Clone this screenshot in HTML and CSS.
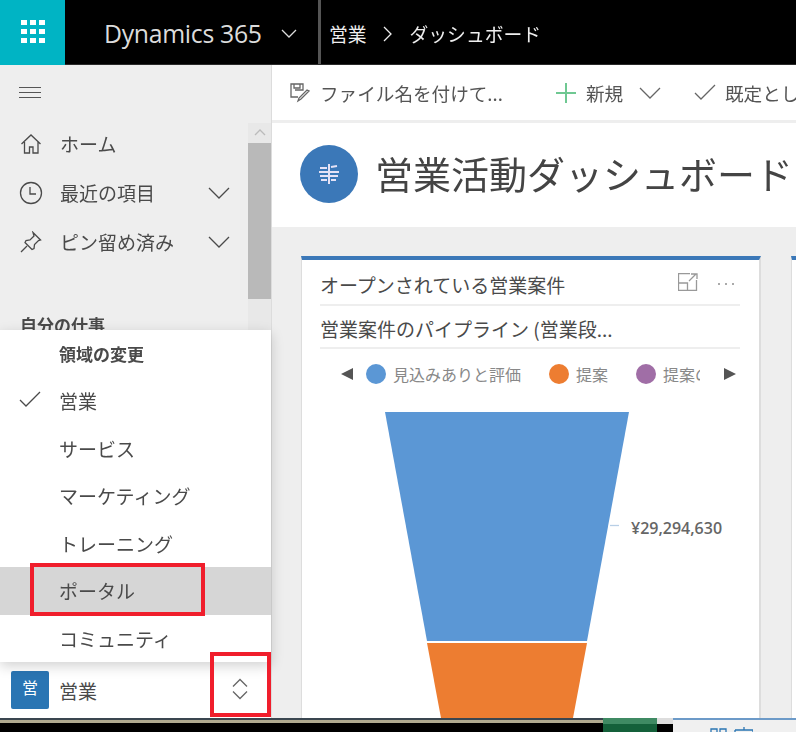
FILE: index.html
```html
<!DOCTYPE html>
<html lang="ja">
    <head>
        <meta charset="UTF-8" />
        <meta name="viewport" content="width=device-width, initial-scale=1.0" />
        <title>営業活動ダッシュボード</title>
        <link rel="stylesheet" href="styles.css">
    </head>
    <body>
        <div class="topbar">
            <div class="app-launcher">
                <svg width="24" height="24" viewBox="0 0 24 24" fill="#fff">
                    <rect x="0" y="0" width="6" height="5" /><rect x="9" y="0" width="6" height="5" /><rect x="18" y="0" width="6" height="5" />
                    <rect x="0" y="9" width="6" height="5" /><rect x="9" y="9" width="6" height="5" /><rect x="18" y="9" width="6" height="5" />
                    <rect x="0" y="18" width="6" height="5" /><rect x="9" y="18" width="6" height="5" /><rect x="18" y="18" width="6" height="5" />
                </svg>
            </div>
            <div class="brand">
                <span class="brand-name">Dynamics 365</span>
                <svg class="brand-chevron" width="16" height="9" viewBox="0 0 16 9"><path d="M1 1l7 7 7-7" /></svg>
            </div>
            <div class="breadcrumb">
                <span>営業</span>
                <svg width="10" height="16" viewBox="0 0 10 16"><path d="M1 1l7 7-7 7" /></svg>
                <span>ダッシュボード</span>
            </div>
        </div>

        <div class="main">
            <aside class="sidebar">
                <div class="hamburger"><span></span><span></span><span></span></div>
                <div class="side-scroll">
                    <div class="scroll-up">
                        <svg width="12" height="7" viewBox="0 0 12 7"><path d="M1 6l5-5 5 5" /></svg>
                    </div>
                    <div class="scroll-thumb"></div>
                </div>
                <div class="nav-item nav-home">
                    <svg class="nav-icon" width="22" height="22" viewBox="0 0 22 22"><path d="M1.500 11L11 2l9.500 9M4.500 9v11h5v-6h3.500v6h5V9" /></svg>
                    <span>ホーム</span>
                </div>
                <div class="nav-item">
                    <svg class="nav-icon" width="24" height="24" viewBox="0 0 24 24"><path d="M12 1.500a10.500 10.500 0 1 0 0 21a10.500 10.500 0 1 0 0-21zM11 6v7h6" /></svg>
                    <span>最近の項目</span>
                    <svg class="nav-chevron" width="22" height="12" viewBox="0 0 22 12"><path d="M1 1l10 10L21 1" /></svg>
                </div>
                <div class="nav-item">
                    <svg class="nav-icon" width="22" height="22" viewBox="0 0 22 22"><path d="M13 1.500l7.500 7.500-2 .5-4 4-.5 4-2 1-7-7 1-2 4-.5 4-4zM7 15l-6 6" /></svg>
                    <span>ピン留め済み</span>
                    <svg class="nav-chevron" width="22" height="12" viewBox="0 0 22 12"><path d="M1 1l10 10L21 1" /></svg>
                </div>
                <div class="nav-heading">自分の仕事</div>

                <div class="flyout">
                    <div class="flyout-title">領域の変更</div>
                    <div class="flyout-item">
                        <svg class="flyout-check" width="22" height="17" viewBox="0 0 22 17"><path d="M1 9l6 6L21 1" /></svg>
                        <span>営業</span>
                    </div>
                    <div class="flyout-item"><span>サービス</span></div>
                    <div class="flyout-item"><span>マーケティング</span></div>
                    <div class="flyout-item"><span>トレーニング</span></div>
                    <div class="flyout-item selected"><span>ポータル</span><div class="red-box portal-box"></div></div>
                    <div class="flyout-item"><span>コミュニティ</span></div>
                </div>

                <div class="area-switch">
                    <div class="area-tile">営</div>
                    <span class="area-name">営業</span>
                    <svg class="area-arrows" width="16" height="22" viewBox="0 0 16 22"><path d="M1 8.500L8 1.500l7 7M1 13.500L8 20.500l7-7" /></svg>
                    <div class="red-box arrows-box"></div>
                </div>
            </aside>

            <div class="content">
                <div class="commandbar">
                    <div class="cmd cmd-save">
                        <svg class="cmd-icon" width="22" height="21" viewBox="0 0 22 21"><path d="M9 15H2V2h12v6H6M5 2v4h6V2M20 9l-8 8-3 2 1-3 8-8z" /></svg>
                        <span>ファイル名を付けて...</span>
                    </div>
                    <div class="cmd cmd-new">
                        <svg width="22" height="22" viewBox="0 0 22 22"><path class="plus" d="M11 1v20M1 11h20" /></svg>
                        <span>新規</span>
                        <svg class="cmd-icon" width="22" height="12" viewBox="0 0 22 12"><path d="M1 1l10 10L21 1" /></svg>
                    </div>
                    <div class="cmd cmd-default">
                        <svg class="cmd-icon" width="22" height="17" viewBox="0 0 22 17"><path d="M1 9l6 6L21 1" /></svg>
                        <span>既定として設定</span>
                    </div>
                </div>

                <div class="titlebar">
                    <div class="title-badge">
                        <svg width="22" height="20" viewBox="0 0 22 20"><path d="M11 0v20M2 4h7M1 8h9M2 12h8M3 16h6M13 3l6-1M12 8h9M12 12h8M13 16h5" /></svg>
                    </div>
                    <h1>営業活動ダッシュボード</h1>
                </div>

                <div class="board">
                    <div class="card">
                        <div class="card-head">
                            <span>オープンされている営業案件</span>
                            <svg class="expand" width="20" height="18" viewBox="0 0 20 18"><path d="M12 .5H.5v17h18V7M.500 10h9v7.500M11 8l7-7M13 1h6v5" /></svg>
                            <span class="more"><i></i><i></i><i></i></span>
                        </div>
                        <div class="card-sub">営業案件のパイプライン (営業段...</div>
                        <div class="legend">
                            <span class="tri tri-left"></span>
                            <div class="legend-items">
                                <span class="legend-entry"><i class="dot dot-blue"></i>見込みありと評価</span>
                                <span class="legend-entry"><i class="dot dot-orange"></i>提案</span>
                                <span class="legend-entry"><i class="dot dot-purple"></i>提案のレビュー</span>
                            </div>
                            <span class="tri tri-right"></span>
                        </div>
                        <div class="chart">
                            <svg width="457" height="306" viewBox="0 0 457 306">
                                <polygon points="83,0 327,0 285,229 125,229" fill="#5b97d5" />
                                <polygon points="125,231 285,231 271,306 139,306" fill="#ed7d31" />
                                <path class="tick" d="M308 113.500h9" />
                            </svg>
                            <span class="chart-label">¥29,294,630</span>
                        </div>
                    </div>
                    <div class="card card-next"></div>
                </div>
            </div>
        </div>

        <div class="taskstrip">
            <div class="strip-dark"></div>
            <div class="strip-green"></div>
            <div class="strip-gap"></div>
            <div class="strip-rest">
                <svg width="60" height="12" viewBox="0 0 60 12"><path d="M2 8h7v4M18 12V3h6v9M27 12V3h6v9M42 4h18v8M42 4v8M51 1v3" /></svg>
            </div>
        </div>
    </body>
</html>
```

FILE: styles.css
```css
* {
    box-sizing: border-box;
}

html,
body {
    height: 732px;
    margin: 0;
    overflow: hidden;
}

body {
    font-family: "Noto Sans CJK JP", "Open Sans", sans-serif;
    color: #4a4a4a;
    background-color: #fff;
    display: flex;
    flex-direction: column;
    filter: blur(.45px); /* the source picture is a soft upscale */
}

svg {
    display: block;
    flex: none;
}

svg path {
    fill: none;
    stroke: currentColor;
    stroke-width: 1.3;
}

/* top bar */
.topbar {
    height: 65px;
    flex: none;
    background-color: #000;
    color: #fff;
    display: flex;
    align-items: center;
    border-bottom: 1px solid #2a2a2a;
}

.app-launcher {
    width: 65px;
    height: 65px;
    background-color: #00b4c4;
    display: flex;
    align-items: center;
    justify-content: center;
}

.brand {
    width: 256px;
    height: 100%;
    padding: 2px 0 0 39px;
    display: flex;
    align-items: center;
    color: #dcdcdc;
    border-right: 3px solid #555;
}

.brand-name {
    font-family: "Open Sans", sans-serif;
    font-size: 24.800px;
    letter-spacing: -.3px;
    margin-right: 19px;
}

.breadcrumb {
    display: flex;
    align-items: center;
    font-size: 18.800px;
    padding: 3px 0 0 8px;
    color: #eee;
}

.breadcrumb svg {
    margin: 0 17px 0 16px;
}

/* left nav */
.main {
    flex: 1;
    display: flex;
    min-height: 0;
}

.sidebar {
    width: 272px;
    flex: none;
    background-color: #eee;
    border-right: 1px solid #dcdcdc;
    position: relative;
}

.hamburger {
    padding: 22px 0 0 19px;
    height: 59px;
}

.hamburger span {
    display: block;
    width: 22px;
    height: 1px;
    background-color: #555;
    margin-bottom: 4px;
}

.side-scroll {
    position: absolute;
    top: 58px;
    right: 0;
    width: 23px;
    height: 208px;
    background-color: #e8e8e8;
}

.scroll-up {
    height: 20px;
    padding: 6px 0 0 6px;
    color: #bbb;
}

.scroll-thumb {
    height: 156px;
    background-color: #b9b9b9;
}

.nav-item {
    height: 49px;
    display: flex;
    align-items: center;
    padding-left: 19px;
    font-size: 19px;
}

.nav-home {
    margin-top: -5px;
}

.nav-icon {
    width: 24px;
    margin-right: 17px;
}

.nav-chevron {
    position: absolute;
    left: 208px;
}

.nav-heading {
    margin-top: 46px;
    padding-left: 20px;
    font-size: 17px;
    font-weight: bold;
}

/* area flyout, sits over the nav */
.flyout {
    position: absolute;
    z-index: 1;
    left: 0;
    top: 265px;
    width: 271px;
    height: 332px;
    background-color: #fff;
    box-shadow: 0 4px 12px rgba(0, 0, 0, .18);
}

.flyout-title {
    height: 47px;
    padding: 11px 0 0 59px;
    font-size: 17px;
    font-weight: bold;
}

.flyout-item {
    height: 47.500px;
    padding-left: 59px;
    font-size: 19px;
    display: flex;
    align-items: center;
    position: relative;
}

.flyout-check {
    position: absolute;
    left: 19px;
    top: 14px;
}

.flyout-item.selected {
    background-color: #d6d6d6;
}

.red-box {
    position: absolute;
    z-index: 2;
    border: 4px solid #f01e2c;
}

.portal-box {
    left: 30px;
    top: -4px;
    width: 175px;
    height: 53px;
}

.area-switch {
    position: absolute;
    left: 0;
    top: 597px;
    width: 271px;
    height: 56px;
    background-color: #fff;
    display: flex;
    align-items: center;
    padding-left: 11px;
}

.area-tile {
    width: 38px;
    height: 38px;
    background-color: #2a75b3;
    border-radius: 2px;
    color: #fff;
    font-size: 16px;
    line-height: 33px;
    text-align: center;
    margin-right: 10px;
}

.area-name {
    font-size: 19px;
}

.area-arrows {
    position: absolute;
    left: 232px;
    top: 16px;
    color: #666;
}

.arrows-box {
    left: 210px;
    top: -10px;
    width: 61px;
    height: 65px;
}

/* right side */
.content {
    flex: 1;
    min-width: 0;
    display: flex;
    flex-direction: column;
}

.commandbar {
    height: 58px;
    flex: none;
    background-color: #fff;
    border-bottom: 3px solid #eee;
    display: flex;
    align-items: center;
    font-size: 18.600px;
    white-space: nowrap;
    overflow: hidden;
}

.cmd {
    display: flex;
    align-items: center;
    flex: none;
    color: #555;
}

.cmd-icon {
    color: #666;
}

.cmd-save {
    padding-left: 17px;
    width: 283px;
}

.cmd-save span {
    margin-left: 9px;
}

.cmd-new {
    width: 139px;
}

.cmd-new span {
    margin: 0 16px 0 9px;
}

.plus {
    stroke: #6fc892;
    stroke-width: 2;
}

.cmd-default span {
    margin-left: 9px;
}

.titlebar {
    height: 104px;
    flex: none;
    background-color: #fff;
    display: flex;
    align-items: center;
    padding: 0 0 2px 28px;
    white-space: nowrap;
    overflow: hidden;
}

.title-badge {
    width: 58px;
    height: 58px;
    flex: none;
    border-radius: 50%;
    background-color: #3b78b8;
    color: #e4e2f6;
    display: flex;
    align-items: center;
    justify-content: center;
    margin-right: 17px;
}

.title-badge path {
    stroke-width: 2;
}

h1 {
    margin: 0 0 4px;
    font-size: 38px;
    font-weight: 400;
    color: #444;
}

.board {
    flex: 1;
    min-height: 0;
    background-color: #eee;
    padding: 29px 0 0 29px;
    display: flex;
    gap: 30px;
    overflow: hidden;
}

.card {
    width: 460px;
    flex: none;
    background-color: #fff;
    border-top: 4px solid #3b78b8;
    border-left: 1px solid #ddd;
    border-right: 2px solid #ddd;
}

.card-next {
    width: 40px;
}

.card-head {
    margin: 0 19px 0 18px;
    height: 46px;
    border-bottom: 2px solid #eee;
    display: flex;
    align-items: center;
    font-size: 19px;
    padding-top: 4px;
    position: relative;
}

.expand {
    position: absolute;
    left: 358px;
    top: 13px;
    color: #999;
}

.more {
    position: absolute;
    left: 398px;
    top: 23px;
    display: flex;
    gap: 5px;
}

.more i {
    width: 2px;
    height: 2px;
    background-color: #aaa;
}

.card-sub {
    margin: 0 19px 0 18px;
    height: 43px;
    line-height: 45px;
    border-bottom: 2px solid #eee;
    font-size: 19px;
    white-space: nowrap;
}

.legend {
    height: 63px;
    display: flex;
    align-items: center;
    padding: 0 0 14px 39px;
    font-size: 16px;
    color: #888;
}

.tri {
    flex: none;
    width: 0;
    height: 0;
    border-top: 6px solid transparent;
    border-bottom: 6px solid transparent;
}

.tri-left {
    border-right: 12px solid #555;
}

.tri-right {
    border-left: 12px solid #555;
    margin-left: 24px;
}

.legend-items {
    width: 334px;
    margin-left: 13px;
    display: flex;
    gap: 28px;
    overflow: hidden;
    white-space: nowrap;
}

.legend-entry {
    display: flex;
    align-items: center;
    flex: none;
}

.dot {
    width: 20px;
    height: 20px;
    border-radius: 50%;
    margin-right: 7px;
}

.dot-blue {
    background-color: #5b97d5;
}

.dot-orange {
    background-color: #ed7d31;
}

.dot-purple {
    background-color: #a06ea6;
}

.chart {
    position: relative;
}

.tick {
    stroke: #b8cfe6;
}

.chart-label {
    position: absolute;
    left: 329px;
    top: 105px;
    font-family: "Open Sans", sans-serif;
    font-size: 16px;
    font-weight: 600;
    color: #666;
}

/* bit of the windows taskbar caught at the bottom edge */
.taskstrip {
    height: 14px;
    flex: none;
    display: flex;
}

.strip-dark {
    width: 603px;
    background-color: #000;
    border-top: 2px solid #3a4650;
    box-shadow: inset 0 3px 0 #b0aa90;
}

.strip-green {
    width: 54px;
    background-color: #14603a;
    border-top: 6px solid #3f8a63;
}

.strip-gap {
    width: 16px;
    background-color: #000;
    border-top: 6px solid #ddd;
}

.strip-rest {
    flex: 1;
    background-color: #f0f0f0;
    border-top: 2px solid #6c9ac8;
    padding: 6px 0 0 20px;
    color: #2a75b3;
}
```
